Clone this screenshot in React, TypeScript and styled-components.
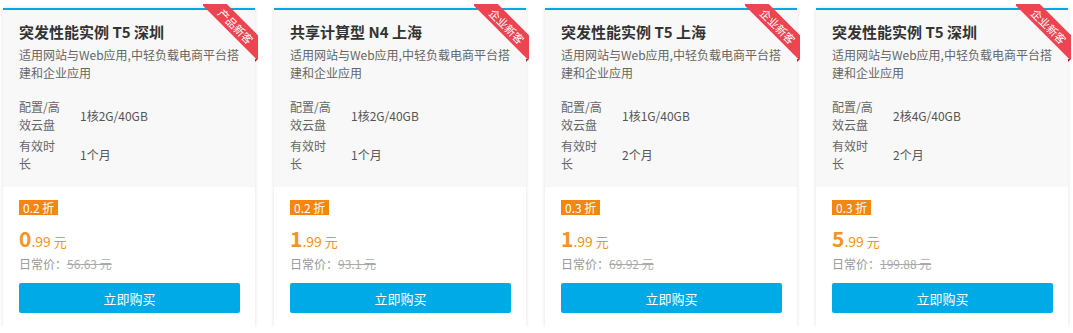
import React from 'react';
import styled, { createGlobalStyle } from 'styled-components';

const GlobalStyle = createGlobalStyle`
  body {
    margin: 0;
    background: #fff;
    font-family: "Noto Sans CJK SC", "Noto Sans", sans-serif;
  }
`;

const Row = styled.div`
  display: flex;
  gap: 19px;
  padding: 8px 0 0 3px;
`;

const Card = styled.div`
  position: relative;
  width: 252px;
  border-top: 2px solid #00a8e6;
  box-shadow: 0 0 4px rgba(0, 0, 0, 0.12);
  background: #fff;
`;

const Top = styled.div`
  background: #f8f8f8;
  padding: 12px 15px 15px 16px;
`;

const Title = styled.div`
  font-size: 15px;
  line-height: 20px;
  font-weight: bold;
  color: #333;
`;

const Desc = styled.div`
  margin-top: 4px;
  margin-right: -8px;
  font-size: 12px;
  line-height: 18px;
  color: #666;
`;

const Specs = styled.div`
  margin-top: 16px;
  display: grid;
  grid-template-columns: 44px 1fr;
  column-gap: 17px;
  row-gap: 4px;
  font-size: 12px;
  line-height: 17.5px;
  color: #666;
`;

const Label = styled.div``;

const Value = styled.div`
  align-self: center;
  color: #555;
`;

const Bottom = styled.div`
  padding: 13px 15px 14px 16px;
`;

const Discount = styled.div`
  width: fit-content;
  background: #f5860f;
  color: #fff;
  font-size: 12px;
  line-height: 15px;
  padding: 0 4px;
`;

const Price = styled.div`
  margin-top: 12px;
  color: #f7931e;
  font-size: 14px;
  line-height: 22px;
  display: flex;
  align-items: baseline;
`;

const Int = styled.span`
  font-size: 21px;
  font-weight: bold;
`;

const Unit = styled.span`
  margin-left: 3px;
  font-size: 13px;
`;

const Original = styled.div`
  margin-top: 2px;
  font-size: 12px;
  line-height: 18px;
  color: #999;

  s {
    color: #aaa;
  }
`;

const BuyButton = styled.button`
  display: block;
  margin-top: 10px;
  width: 221px;
  height: 30px;
  border: none;
  border-radius: 2px;
  background: #00aae6;
  color: #fff;
  font-family: inherit;
  font-size: 13px;
  cursor: pointer;
`;

const RibbonBox = styled.div`
  position: absolute;
  top: -6px;
  right: -3px;
  width: 55px;
  height: 55px;
  overflow: hidden;
`;

const Band = styled.span`
  position: absolute;
  left: -12px;
  top: 13px;
  width: 90px;
  height: 18px;
  transform: rotate(45deg);
  background: #ec4450;
  color: #fff;
  font-size: 11px;
  line-height: 18px;
  text-align: center;
  white-space: nowrap;
`;

const Fold = styled.span`
  position: absolute;
  right: -3px;
  top: 49px;
  width: 0;
  height: 0;
  border-left: 3px solid #b5262f;
  border-bottom: 3px solid transparent;
`;

type Item = {
  title: string;
  tag: string;
  config: string;
  period: string;
  discount: string;
  int: string;
  dec: string;
  original: string;
};

const items: Item[] = [
  { title: '突发性能实例 T5 深圳', tag: '产品新客', config: '1核2G/40GB', period: '1个月', discount: '0.2 折', int: '0', dec: '.99', original: '56.63 元' },
  { title: '共享计算型 N4 上海', tag: '企业新客', config: '1核2G/40GB', period: '1个月', discount: '0.2 折', int: '1', dec: '.99', original: '93.1 元' },
  { title: '突发性能实例 T5 上海', tag: '企业新客', config: '1核1G/40GB', period: '2个月', discount: '0.3 折', int: '1', dec: '.99', original: '69.92 元' },
  { title: '突发性能实例 T5 深圳', tag: '企业新客', config: '2核4G/40GB', period: '2个月', discount: '0.3 折', int: '5', dec: '.99', original: '199.88 元' },
];

function App() {
  return (
    <>
      <GlobalStyle />
      <Row>
        {items.map((it, i) => (
          <Card key={i}>
            <RibbonBox>
              <Band>{it.tag}</Band>
            </RibbonBox>
            <Fold />
            <Top>
              <Title>{it.title}</Title>
              <Desc>适用网站与Web应用,中轻负载电商平台搭建和企业应用</Desc>
              <Specs>
                <Label>配置/高效云盘</Label>
                <Value>{it.config}</Value>
                <Label>有效时长</Label>
                <Value>{it.period}</Value>
              </Specs>
            </Top>
            <Bottom>
              <Discount>{it.discount}</Discount>
              <Price>
                <Int>{it.int}</Int>
                <span>{it.dec}</span>
                <Unit>元</Unit>
              </Price>
              <Original>
                日常价：<s>{it.original}</s>
              </Original>
              <BuyButton>立即购买</BuyButton>
            </Bottom>
          </Card>
        ))}
      </Row>
    </>
  );
}

export default App;
